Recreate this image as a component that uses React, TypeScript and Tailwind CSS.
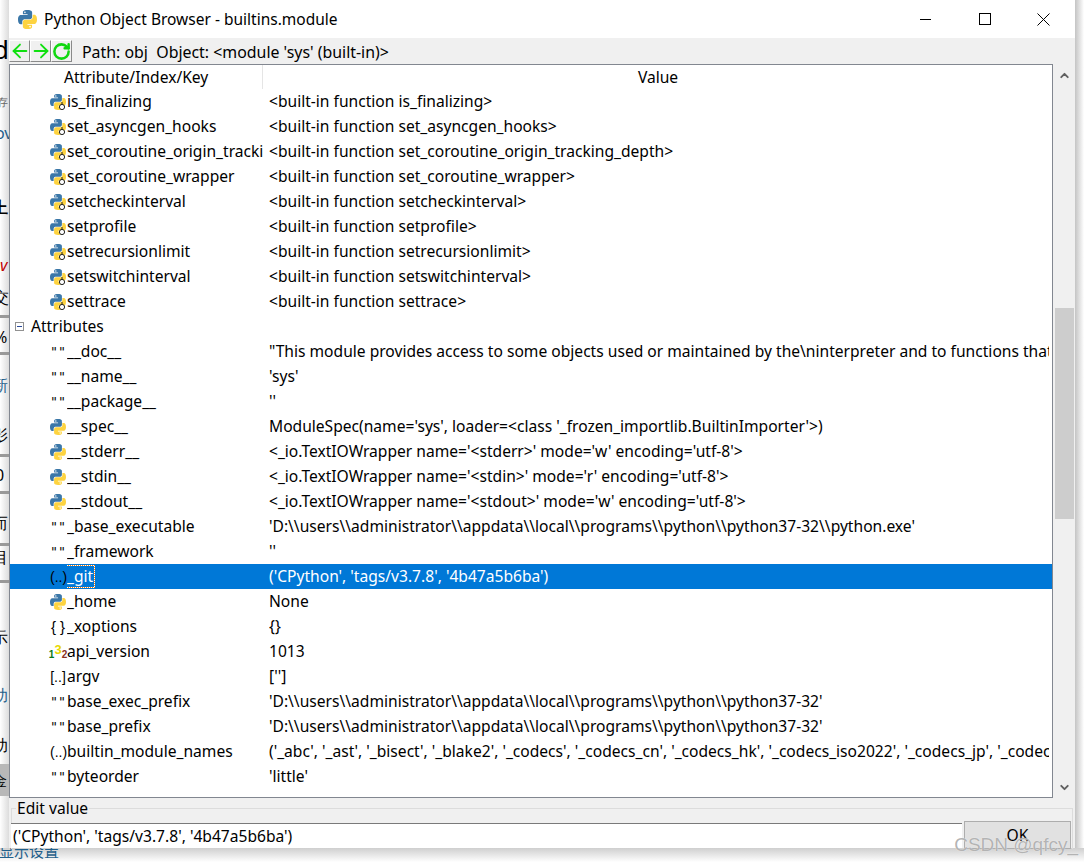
import { ArrowLeft, ArrowRight, ChevronDown, ChevronUp, RotateCw } from "lucide-react"

type Kind = "fn" | "py" | "str" | "tuple" | "dict" | "list" | "num"

interface Row {
  kind: Kind
  name: string
  value: string
}

const topRows: Row[] = [
  { kind: "fn", name: "is_finalizing", value: "<built-in function is_finalizing>" },
  { kind: "fn", name: "set_asyncgen_hooks", value: "<built-in function set_asyncgen_hooks>" },
  { kind: "fn", name: "set_coroutine_origin_tracking_depth", value: "<built-in function set_coroutine_origin_tracking_depth>" },
  { kind: "fn", name: "set_coroutine_wrapper", value: "<built-in function set_coroutine_wrapper>" },
  { kind: "fn", name: "setcheckinterval", value: "<built-in function setcheckinterval>" },
  { kind: "fn", name: "setprofile", value: "<built-in function setprofile>" },
  { kind: "fn", name: "setrecursionlimit", value: "<built-in function setrecursionlimit>" },
  { kind: "fn", name: "setswitchinterval", value: "<built-in function setswitchinterval>" },
  { kind: "fn", name: "settrace", value: "<built-in function settrace>" },
]

const attrRows: Row[] = [
  { kind: "str", name: "__doc__", value: "\"This module provides access to some objects used or maintained by the\\ninterpreter and to functions that interact strongly with the interpreter" },
  { kind: "str", name: "__name__", value: "'sys'" },
  { kind: "str", name: "__package__", value: "''" },
  { kind: "py", name: "__spec__", value: "ModuleSpec(name='sys', loader=<class '_frozen_importlib.BuiltinImporter'>)" },
  { kind: "py", name: "__stderr__", value: "<_io.TextIOWrapper name='<stderr>' mode='w' encoding='utf-8'>" },
  { kind: "py", name: "__stdin__", value: "<_io.TextIOWrapper name='<stdin>' mode='r' encoding='utf-8'>" },
  { kind: "py", name: "__stdout__", value: "<_io.TextIOWrapper name='<stdout>' mode='w' encoding='utf-8'>" },
  { kind: "str", name: "_base_executable", value: "'D:\\\\users\\\\administrator\\\\appdata\\\\local\\\\programs\\\\python\\\\python37-32\\\\python.exe'" },
  { kind: "str", name: "_framework", value: "''" },
  { kind: "tuple", name: "_git", value: "('CPython', 'tags/v3.7.8', '4b47a5b6ba')" },
  { kind: "py", name: "_home", value: "None" },
  { kind: "dict", name: "_xoptions", value: "{}" },
  { kind: "num", name: "api_version", value: "1013" },
  { kind: "list", name: "argv", value: "['']" },
  { kind: "str", name: "base_exec_prefix", value: "'D:\\\\users\\\\administrator\\\\appdata\\\\local\\\\programs\\\\python\\\\python37-32'" },
  { kind: "str", name: "base_prefix", value: "'D:\\\\users\\\\administrator\\\\appdata\\\\local\\\\programs\\\\python\\\\python37-32'" },
  { kind: "tuple", name: "builtin_module_names", value: "('_abc', '_ast', '_bisect', '_blake2', '_codecs', '_codecs_cn', '_codecs_hk', '_codecs_iso2022', '_codecs_jp', '_codecs_kr', '_codecs_tw')" },
  { kind: "str", name: "byteorder", value: "'little'" },
]

function PythonLogo({ size = 16 }: { size?: number }) {
  const half =
    "M54.9 0C26.8 0 28.6 12.2 28.6 12.2v12.6h26.8v3.8H17.9S0 26.6 0 54.9c0 28.3 15.7 27.3 15.7 27.3h9.3V69s-.5-15.7 15.4-15.7h26.6s14.9.2 14.9-14.4V14.7S84.2 0 54.9 0zM40.1 8.5a4.8 4.8 0 1 1 0 9.6 4.8 4.8 0 0 1 0-9.6z"
  return (
    <svg width={size} height={size} viewBox="0 0 110 110">
      <path d={half} fill="#3b77a8" />
      <path d={half} fill="#fdd340" transform="rotate(180 55 55)" />
    </svg>
  )
}

function RowIcon({ kind }: { kind: Kind }) {
  if (kind === "py") return <PythonLogo />
  if (kind === "fn") {
    return (
      <span className="relative block h-4 w-4">
        <PythonLogo />
        <svg className="absolute left-[8px] top-[8px]" width="8" height="9" viewBox="0 0 8 9">
          <circle cx="4" cy="5" r="2.6" fill="#fff" stroke="#222" strokeWidth="1" />
          <path d="M4 0v2" stroke="#222" strokeWidth="1" />
        </svg>
      </span>
    )
  }
  if (kind === "num") {
    return (
      <span className="flex h-4 w-4 items-end justify-center font-['Liberation_Sans',sans-serif] text-[10px] font-bold leading-none">
        <span className="text-[#0a7a1a]">1</span>
        <span className="mb-[4px] text-[13px] text-[#e8d800]">3</span>
        <span className="text-[#8a3020]">2</span>
      </span>
    )
  }
  if (kind === "str") {
    return <span className="block w-4 whitespace-nowrap pl-px font-['DejaVu_Sans',sans-serif] text-[13px] leading-4 tracking-[2px]">{"\"\""}</span>
  }
  if (kind === "dict") {
    return <span className="block w-4 whitespace-nowrap pl-px font-['Liberation_Sans',sans-serif] text-[15px] leading-4 tracking-[4px]">{"{}"}</span>
  }
  return (
    <span className="block w-4 whitespace-nowrap text-center font-['Liberation_Sans',sans-serif] text-[14px] leading-4 text-black">
      {kind === "tuple" ? "(..)" : "[..]"}
    </span>
  )
}

function TreeRow({ row }: { row: Row }) {
  const selected = row.name === "_git"
  return (
    <div className={`flex h-[25px] items-center ${selected ? "bg-[#0078d7] text-white" : "text-black"}`}>
      <div className={`flex w-[57px] shrink-0 justify-end pr-px ${selected ? "text-black" : ""}`}>
        <RowIcon kind={row.kind} />
      </div>
      <div className="w-[196px] shrink-0 overflow-hidden whitespace-nowrap">
        <span className={`inline-block leading-[21px] ${selected ? "-ml-px border border-white pr-px outline-1 -outline-offset-1 outline-dotted outline-[#ff7a00]" : ""}`}>
          {row.name}
        </span>
      </div>
      <div className="ml-[6px] mr-[3px] min-w-0 flex-1 overflow-hidden whitespace-pre">{row.value}</div>
    </div>
  )
}

function ToolButton({ children }: { children: React.ReactNode }) {
  return (
    <button className="flex h-[22px] w-[21px] items-center justify-center overflow-hidden border border-b-[#8a8a8a] border-l-white border-r-[#8a8a8a] border-t-white bg-[#f0f0f0]">
      {children}
    </button>
  )
}

export default function App() {
  return (
    <div className="h-[862px] w-[1084px] overflow-hidden bg-white font-['Noto_Sans',sans-serif] text-[15.6px] text-black">
      <div className="relative flex h-[848px]">
        {/* page showing behind the dialog */}
        <div className="flex w-[9px] shrink-0 flex-col overflow-hidden whitespace-nowrap bg-gradient-to-r from-white to-[#dcdcdc] text-[16px] leading-5">
          <div className="h-[36px] shrink-0" />
          <div className="h-[26px] shrink-0 -translate-x-[7px] text-[26px] leading-[26px]">d</div>
          <div className="h-[30px] shrink-0" />
          <div className="h-[20px] shrink-0 -translate-x-[3px] text-[11px] text-[#666]">存</div>
          <div className="h-[11px] shrink-0" />
          <div className="h-[20px] shrink-0 -translate-x-[5px] text-[#1f5f8b]">ov</div>
          <div className="h-[54px] shrink-0" />
          <div className="h-[20px] shrink-0 -translate-x-[8px] font-bold">上</div>
          <div className="h-[38px] shrink-0" />
          <div className="h-[20px] shrink-0 text-[#c00000] italic">v</div>
          <div className="h-[12px] shrink-0" />
          <div className="h-[20px] shrink-0 -translate-x-[7px]">交</div>
          <div className="h-[8px] shrink-0" />
          <div className="h-[3px] shrink-0 bg-[#999]" />
          <div className="h-[9px] shrink-0" />
          <div className="h-[20px] shrink-0 -translate-x-[6px]">%</div>
          <div className="h-[5px] shrink-0" />
          <div className="h-[3px] shrink-0 bg-[#999]" />
          <div className="h-[20px] shrink-0" />
          <div className="h-[20px] shrink-0 -translate-x-[8px] text-[#1f5f8b]">新</div>
          <div className="h-[30px] shrink-0" />
          <div className="h-[20px] shrink-0 -translate-x-[8px]">影</div>
          <div className="h-[9px] shrink-0" />
          <div className="h-[3px] shrink-0 bg-[#999]" />
          <div className="h-[8px] shrink-0" />
          <div className="h-[20px] shrink-0 -translate-x-[5px]">0</div>
          <div className="h-[6px] shrink-0" />
          <div className="h-[3px] shrink-0 bg-[#999]" />
          <div className="h-[19px] shrink-0" />
          <div className="h-[20px] shrink-0 -translate-x-[8px]">而</div>
          <div className="h-[10px] shrink-0" />
          <div className="h-[3px] shrink-0 bg-[#999]" />
          <div className="h-px shrink-0" />
          <div className="h-[20px] shrink-0 -translate-x-[8px]">目</div>
          <div className="h-[13px] shrink-0" />
          <div className="h-[3px] shrink-0 bg-[#999]" />
          <div className="h-[44px] shrink-0" />
          <div className="h-[20px] shrink-0 -translate-x-[8px]">示</div>
          <div className="h-[38px] shrink-0" />
          <div className="h-[20px] shrink-0 -translate-x-[8px] text-[#1f5f8b]">助</div>
          <div className="h-[30px] shrink-0" />
          <div className="h-[20px] shrink-0 -translate-x-[8px]">助</div>
          <div className="h-[9px] shrink-0" />
          <div className="h-[32px] shrink-0 bg-[#b8b8b8] text-[15px] leading-8">
            <div className="-translate-x-[8px]">金</div>
          </div>
        </div>

        <div className="flex w-[1066px] shrink-0 flex-col bg-[#f0f0f0]">
          {/* title bar */}
          <div className="flex h-[38px] shrink-0 items-center bg-white">
            <div className="ml-[9px]">
              <PythonLogo size={19} />
            </div>
            <div className="ml-[7px] flex-1 pt-px text-[15.5px]">Python Object Browser - builtins.module</div>
            <div className="flex h-full pr-[2px]">
              <div className="flex w-[59px] items-center justify-center">
                <div className="h-px w-[11px] bg-black" />
              </div>
              <div className="flex w-[59px] items-center justify-center">
                <div className="h-[12px] w-[12px] border border-black" />
              </div>
              <div className="flex w-[59px] items-center justify-center">
                <svg width="13" height="13" viewBox="0 0 13 13">
                  <path d="M.5.5l12 12M12.5.5l-12 12" stroke="#000" strokeWidth="1" fill="none" />
                </svg>
              </div>
            </div>
          </div>

          {/* toolbar */}
          <div className="flex h-[26px] shrink-0 items-start pt-[2px]">
            <ToolButton>
              <ArrowLeft size={22} strokeWidth={2} className="shrink-0 text-[#10e010]" />
            </ToolButton>
            <ToolButton>
              <ArrowRight size={22} strokeWidth={2} className="shrink-0 text-[#10e010]" />
            </ToolButton>
            <ToolButton>
              <RotateCw size={19} strokeWidth={3.2} className="shrink-0 text-[#10d810]" />
            </ToolButton>
            <div className="ml-[10px] whitespace-pre text-[15.9px] leading-[24px]">{"Path: obj  Object: <module 'sys' (built-in)>"}</div>
          </div>

          {/* tree + scrollbar */}
          <div className="flex h-[734px] shrink-0">
            <div className="flex w-[1044px] shrink-0 flex-col overflow-hidden border border-[#828790] bg-white">
              <div className="flex h-[24px] shrink-0 items-center">
                <div className="w-[253px] shrink-0 border-r border-[#e5e5e5] pl-[54px] leading-[24px]">Attribute/Index/Key</div>
                <div className="flex-1 pl-px text-center leading-[24px]">Value</div>
              </div>
              {topRows.map((row) => (
                <TreeRow key={row.name} row={row} />
              ))}
              <div className="flex h-[25px] shrink-0 items-center">
                <div className="ml-[5px] flex h-[9px] w-[9px] items-center justify-center border border-[#919191]">
                  <div className="h-px w-[5px] bg-[#2a4a9a]" />
                </div>
                <div className="ml-[7px]">Attributes</div>
              </div>
              {attrRows.map((row) => (
                <TreeRow key={row.name} row={row} />
              ))}
            </div>
            <div className="flex w-[22px] shrink-0 flex-col items-center">
              <div className="flex h-[22px] w-full items-center justify-center text-[#606060]">
                <ChevronUp size={13} strokeWidth={3.5} />
              </div>
              <div className="h-[222px]" />
              <div className="h-[211px] w-[19px] bg-[#cdcdcd]" />
              <div className="flex-1" />
              <div className="flex h-[22px] w-full items-center justify-center text-[#606060]">
                <ChevronDown size={13} strokeWidth={3.5} />
              </div>
            </div>
          </div>

          {/* edit value */}
          <fieldset className="mx-[2px] mt-px flex-1 border border-b-0 border-[#dcdcdc]">
            <legend className="ml-[4px] px-px leading-[18px]">Edit value</legend>
            <div className="flex items-start">
              <div className="ml-[-1px] mt-[6px] h-[25px] w-[951px] overflow-hidden whitespace-pre border-t border-[#7a7a7a] bg-white pl-[2px] pt-px leading-[23px]">
                {"('CPython', 'tags/v3.7.8', '4b47a5b6ba')"}
              </div>
              <button className="ml-[2px] mt-[4px] h-[28px] w-[107px] border border-[#adadad] bg-[#e1e1e1] text-center leading-[26px]">OK</button>
            </div>
          </fieldset>
        </div>

        <div className="w-[9px] shrink-0 bg-gradient-to-r from-[#c4c4c4] to-white" />

        <div className="absolute bottom-[-11px] right-[6px] whitespace-nowrap font-['Liberation_Sans',sans-serif] text-[19px] text-[#a0a0a0]/80 [text-shadow:0_0_1px_#fff]">
          CSDN @qfcy_
        </div>
      </div>

      <div className="h-[14px] overflow-hidden bg-gradient-to-b from-[#cfcfcf] to-white">
        <div className="-ml-px -mt-[7px] font-['Noto_Sans_CJK_SC',sans-serif] text-[15px] leading-5 text-[#1f5f8b]">显示设置</div>
      </div>
    </div>
  )
}
